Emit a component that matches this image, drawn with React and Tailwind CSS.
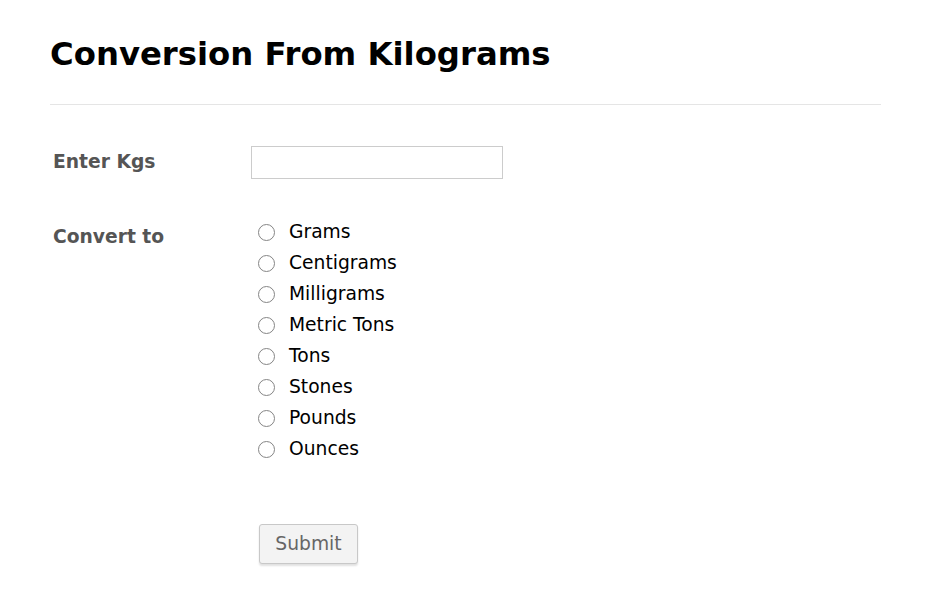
const units = ["Grams", "Centigrams", "Milligrams", "Metric Tons", "Tons", "Stones", "Pounds", "Ounces"];

export default function App() {
  return (
    <div className="min-h-[597px] bg-white px-[50px] pt-[32px] font-['DejaVu_Sans',sans-serif] text-black">
      <h1 className="text-[32.3px] font-bold leading-[44px] w-[510px]">Conversion From Kilograms</h1>
      <hr className="mt-[28px] w-[831px] border-t border-[#e5e5e5]" />

      <div className="mt-[41px] flex items-center">
        <label className="w-[201px] pl-[3px] text-[18.7px] font-bold text-[#555]">Enter Kgs</label>
        <input type="text" className="h-[33px] w-[252px] border border-[#ccc] bg-white px-2 text-[16px] outline-none" />
      </div>

      <div className="mt-[38px] flex">
        <label className="w-[201px] pl-[3px] pt-[6px] text-[18.7px] font-bold text-[#555]">Convert to</label>
        <div className="flex flex-col">
          {units.map((u) => (
            <label key={u} className="flex h-[31px] items-center text-[18.7px]">
              <span className="ml-[7px] mr-[14px] box-border h-[17px] w-[17px] rounded-full border-[1.5px] border-[#858585] bg-white" />
              {u}
            </label>
          ))}
        </div>
      </div>

      <div className="mt-[59px] pl-[209px]">
        <button className="h-[40px] w-[99px] rounded-[3px] border border-[#c8c8c8] bg-[#f3f3f3] text-[18.7px] text-[#666] shadow-[0_2px_2px_rgba(0,0,0,0.12)]">
          Submit
        </button>
      </div>
    </div>
  );
}
